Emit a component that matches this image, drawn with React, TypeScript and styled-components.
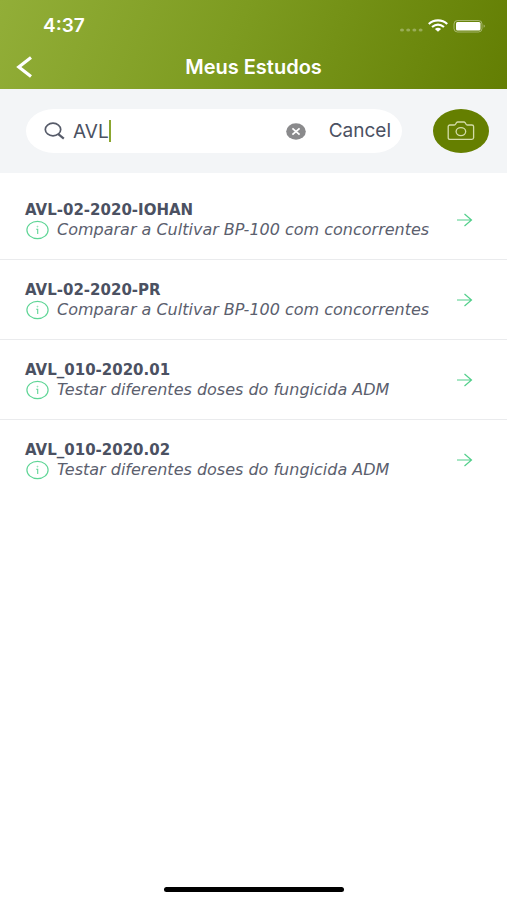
import React, { useState } from "react";
import styled, { createGlobalStyle } from "styled-components";

const GlobalStyle = createGlobalStyle`
  *, *::before, *::after { box-sizing: border-box; }
  body { margin: 0; background: #ffffff; font-family: Inter, "Liberation Sans", sans-serif; }
  button, input { font: inherit; color: inherit; border: 0; padding: 0; margin: 0; background: none; }
  button { cursor: pointer; }
  svg { display: block; flex: none; }
`;

const Screen = styled.div`
  min-height: 100vh;
  display: flex;
  flex-direction: column;
  color: #4b5162;
`;

const Header = styled.header`
  height: 89px;
  padding-top: 10px;
  color: #ffffff;
  background: linear-gradient(112deg, #92ae38 0%, #7d9b20 46%, #637e03 100%);
`;

const StatusBar = styled.div`
  height: 32px;
  padding: 0 21px 0 43px;
  display: flex;
  align-items: center;
  justify-content: space-between;
`;

const Clock = styled.time`
  font-size: 19px;
  line-height: 20px;
  font-weight: 600;
`;

const NavBar = styled.div`
  height: 48px;
  padding: 1px 16px 0;
  display: grid;
  grid-template-columns: 40px 1fr 40px;
  align-items: center;
`;

const BackButton = styled.button`
  height: 32px;
  display: flex;
  align-items: center;
`;

const PageTitle = styled.h1`
  margin: 0;
  text-align: center;
  font-size: 20px;
  line-height: 24px;
  font-weight: 600;
`;

const SearchSection = styled.form`
  height: 84px;
  padding: 0 18px 0 26px;
  display: flex;
  align-items: center;
  gap: 31px;
  background: #f3f5f7;
`;

const SearchBox = styled.div`
  flex: 1;
  min-width: 0;
  height: 44px;
  padding: 0 11px 0 18px;
  display: flex;
  align-items: center;
  border-radius: 28px / 22px;
  background: #ffffff;
  font-size: 19px;
`;

const QueryInput = styled.input`
  flex: none;
  min-width: 0;
  max-width: 180px;
  height: 32px;
  padding-left: 8px;
  outline: none;
  caret-color: transparent;
  field-sizing: content;
`;

const QueryField = styled.label`
  flex: 1;
  min-width: 0;
  display: flex;
  align-items: center;
`;

const Caret = styled.span`
  width: 2px;
  height: 22px;
  background: #8ba62f;
`;

const CancelButton = styled.button`
  margin-left: 23px;
  line-height: 24px;
`;

const CameraButton = styled.button`
  flex: none;
  width: 56px;
  height: 44px;
  display: grid;
  place-items: center;
  border-radius: 50%;
  background: #657f00;
`;

const StudyList = styled.ul`
  flex: 1;
  margin: 0;
  padding: 7px 0 0;
  list-style: none;
`;

const StudyItem = styled.li`
  border-bottom: 1px solid #eaebed;

  &:last-child { border-bottom-color: transparent; }
`;

const StudyLink = styled.a`
  height: 79px;
  padding: 0 34px 0 25px;
  display: flex;
  align-items: center;
  justify-content: space-between;
  color: inherit;
  text-decoration: none;
`;

const StudyText = styled.div`
  min-width: 0;
  font-family: "DejaVu Sans", sans-serif;
`;

const StudyCode = styled.h2`
  margin: 0;
  font-size: 15px;
  line-height: 20px;
  font-weight: 700;
`;

const StudySummary = styled.p`
  margin: 0;
  display: flex;
  align-items: center;
  gap: 8px;
  color: #5b606e;
  font-size: 16px;
  line-height: 20px;
  font-style: italic;
  white-space: nowrap;
`;

const HomeArea = styled.footer`
  height: 13px;
  display: flex;
  justify-content: center;
`;

const HomeIndicator = styled.div`
  width: 180px;
  height: 5px;
  border-radius: 3px;
  background: #000000;
`;

const StatusIcons = () => (
  <svg width="88" height="16" viewBox="0 0 88 16" aria-hidden="true">
    <g fill="#fff" opacity="0.3">
      <ellipse cx="4" cy="12" rx="2" ry="1.6" />
      <ellipse cx="10.200" cy="12" rx="2" ry="1.6" />
      <ellipse cx="16.400" cy="12" rx="2" ry="1.6" />
      <ellipse cx="22.600" cy="12" rx="2" ry="1.6" />
    </g>
    <g fill="none" stroke="#fff" strokeWidth="2.2">
      <path d="M30.800 6C35.800 1.200 44.200 1.200 49.200 6" />
      <path d="M34 9C38 5.700 42 5.700 46 9" />
    </g>
    <path d="M36.900 10.900Q40 8.700 43.100 10.900L40 13.700Z" fill="#fff" />
    <rect x="56" y="2.500" width="28" height="11.500" rx="3.500" fill="none" stroke="#fff" opacity="0.4" />
    <rect x="58" y="4" width="24.500" height="8.500" rx="1.500" fill="#fff" />
    <path d="M85.700 6.500Q87.800 8.100 85.700 9.800Z" fill="#fff" opacity="0.5" />
  </svg>
);

const BackIcon = () => (
  <svg width="16" height="22" viewBox="0 0 16 22" fill="none" stroke="#fff" strokeWidth="3.200" aria-hidden="true">
    <path d="M15 1.500 2.800 11 15 20.500" />
  </svg>
);

const SearchIcon = () => (
  <svg width="21" height="18" viewBox="0 0 21 18" fill="none" stroke="#565b69" strokeWidth="1.700" aria-hidden="true">
    <ellipse cx="9" cy="7.500" rx="7.700" ry="6.300" />
    <path d="m14.300 12.100 5.500 4.500" strokeWidth="2.200" />
  </svg>
);

const ClearIcon = () => (
  <svg width="20" height="17" viewBox="0 0 20 17" aria-hidden="true">
    <ellipse cx="10" cy="8.500" rx="9.800" ry="8.300" fill="#8a8a8c" />
    <path d="m6.400 5.400 7.200 6.200M13.600 5.400l-7.200 6.200" stroke="#fff" strokeWidth="1.800" />
  </svg>
);

const CameraIcon = () => (
  <svg width="28" height="20" viewBox="0 0 28 20" fill="none" stroke="#d3dca8" strokeWidth="1.300" aria-hidden="true">
    <path d="M3 4H7.200Q8.200 4 8.700 3L9.500 1.700Q9.900 1 10.800 1H16.800Q17.700 1 18.100 1.700L18.900 3Q19.400 4 20.400 4H24.800Q26.600 4 26.600 5.500V16.800Q26.600 18.300 24.800 18.300H3Q1.200 18.300 1.200 16.800V5.500Q1.200 4 3 4Z" />
    <ellipse cx="13.900" cy="10.600" rx="4.800" ry="4" />
  </svg>
);

const InfoIcon = () => (
  <svg width="24" height="20" viewBox="0 0 24 20" fill="none" stroke="#5fd596" aria-hidden="true">
    <ellipse cx="12.500" cy="10" rx="10.600" ry="8.700" strokeWidth="1.200" />
    <path d="M11.200 9.200H12.700V14" strokeWidth="1.100" />
    <ellipse cx="12.500" cy="6.600" rx="0.600" ry="0.400" strokeWidth="0.600" />
  </svg>
);

const ArrowIcon = () => (
  <svg width="17" height="14" viewBox="0 0 17 14" fill="none" stroke="#52cf8b" strokeWidth="1.200" aria-hidden="true">
    <path d="M1 7H15.500M8.500 1 15.500 7 8.500 13" />
  </svg>
);

const studies = [
  { code: "AVL-02-2020-IOHAN", summary: "Comparar a Cultivar BP-100 com concorrentes" },
  { code: "AVL-02-2020-PR", summary: "Comparar a Cultivar BP-100 com concorrentes" },
  { code: "AVL_010-2020.01", summary: "Testar diferentes doses do fungicida ADM" },
  { code: "AVL_010-2020.02", summary: "Testar diferentes doses do fungicida ADM" },
];

export default function App() {
  const [query, setQuery] = useState("AVL");
  const matches = studies.filter((s) => s.code.toLowerCase().includes(query.toLowerCase()));

  return (
    <>
      <GlobalStyle />
      <Screen>
        <Header>
          <StatusBar>
            <Clock>4:37</Clock>
            <StatusIcons />
          </StatusBar>
          <NavBar>
            <BackButton type="button" aria-label="Voltar">
              <BackIcon />
            </BackButton>
            <PageTitle>Meus Estudos</PageTitle>
          </NavBar>
        </Header>
        <SearchSection role="search" onSubmit={(e) => e.preventDefault()}>
          <SearchBox>
            <QueryField>
              <SearchIcon />
              <QueryInput
                type="text"
                aria-label="Buscar estudos"
                value={query}
                onChange={(e) => setQuery(e.target.value)}
              />
              <Caret />
            </QueryField>
            <button type="button" aria-label="Limpar" onClick={() => setQuery("")}>
              <ClearIcon />
            </button>
            <CancelButton type="button">Cancel</CancelButton>
          </SearchBox>
          <CameraButton type="button" aria-label="Câmera">
            <CameraIcon />
          </CameraButton>
        </SearchSection>
        <StudyList>
          {matches.map((study) => (
            <StudyItem key={study.code}>
              <StudyLink href={`#${study.code}`}>
                <StudyText>
                  <StudyCode>{study.code}</StudyCode>
                  <StudySummary>
                    <InfoIcon />
                    {study.summary}
                  </StudySummary>
                </StudyText>
                <ArrowIcon />
              </StudyLink>
            </StudyItem>
          ))}
        </StudyList>
        <HomeArea>
          <HomeIndicator />
        </HomeArea>
      </Screen>
    </>
  );
}
